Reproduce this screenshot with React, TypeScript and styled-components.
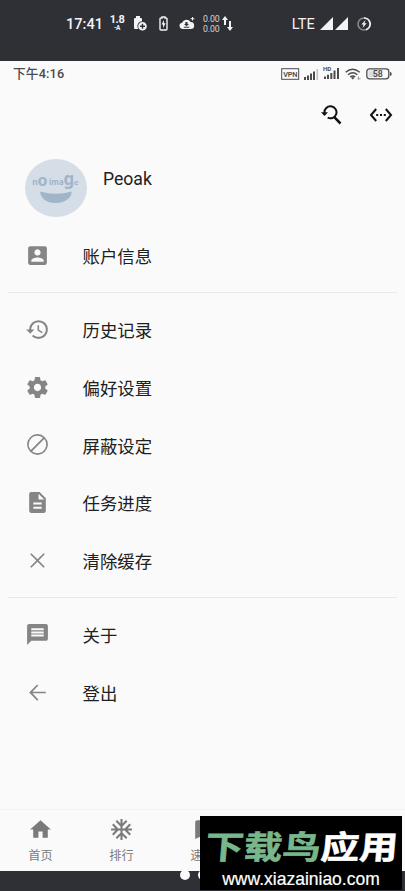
import React from 'react';
import styled, { createGlobalStyle } from 'styled-components';

const Global = createGlobalStyle`
  * { box-sizing: border-box; }
  body { margin: 0; background: #2f3036; font-family: Roboto, "Noto Sans CJK SC", sans-serif; }
`;

const Screen = styled.div`
  position: relative;
  width: 405px;
  height: 891px;
  display: flex;
  flex-direction: column;
  overflow: hidden;
  background: #2f3036;
`;

const SystemBar = styled.header`
  height: 61px;
  flex: none;
  display: flex;
  align-items: center;
  padding: 0 34px 14px 66px;
  color: #f3f3f5;
`;

const Clock = styled.span`
  width: 44px;
  margin-top: 1px;
  font-size: 14.6px;
  font-weight: 500;
  line-height: 18px;
  white-space: nowrap;
`;

const Amps = styled.span`
  width: 14px;
  display: flex;
  flex-direction: column;
  align-items: center;
  font-weight: 700;
  font-size: 11px;
  letter-spacing: -0.4px;
`;

const AmpValue = styled.span`
  line-height: 10px;
`;

const AmpUnit = styled.small`
  font-size: 6.5px;
  line-height: 7px;
`;

const Speed = styled.span`
  width: 18px;
  margin-left: 8px;
  font-size: 8.7px;
  line-height: 10px;
  letter-spacing: -0.1px;
  color: #d4d4d8;
`;

const Glyph = styled.svg<{ $w: number; $h?: number; $ml?: number; $mt?: number }>`
  display: block;
  flex: none;
  width: ${p => p.$w}px;
  height: ${p => p.$h ?? p.$w}px;
  margin-left: ${p => p.$ml ?? 0}px;
  margin-top: ${p => p.$mt ?? 0}px;
  fill: currentColor;
`;

const Spacer = styled.span`
  flex: 1;
`;

const Network = styled.span`
  font-size: 14.6px;
  line-height: 18px;
  letter-spacing: 0.1px;
`;

const Phone = styled.main`
  height: 810px;
  flex: none;
  display: flex;
  flex-direction: column;
  background: #fafafa;
  color: #202020;
`;

const PhoneBar = styled.div`
  height: 26px;
  display: flex;
  align-items: center;
  padding: 0 13px 0 13px;
  color: #4b4b4b;
`;

const PhoneTime = styled.span`
  font-size: 12.7px;
  font-weight: 500;
  line-height: 18px;
  letter-spacing: 0.15px;
`;

const Actions = styled.div`
  height: 56px;
  display: flex;
  justify-content: flex-end;
  align-items: center;
  padding-right: 12.5px;
  color: #111;
`;

const Profile = styled.section`
  height: 84px;
  display: flex;
  padding: 16px 25px 0;
`;

const Name = styled.span`
  margin: 10px 0 0 16px;
  font-size: 17.6px;
  line-height: 20px;
`;

const Group = styled.ul`
  list-style: none;
  margin: 0 8px;
  padding: 8px 0 7.6px;
  border-bottom: 1px solid #e8e8e8;
  &:first-of-type { padding-top: 0; }
  &:last-of-type { border-bottom: 0; }
`;

const Row = styled.li`
  height: 57.7px;
  display: flex;
  align-items: center;
  padding: 2px 0 0 16.5px;
  gap: 33px;
  font-size: 17.4px;
  line-height: 24px;
`;

const RowIcon = styled.svg`
  width: 25px;
  height: 25px;
  flex: none;
  fill: #858585;
  margin-top: -3.5px;
`;

const Nav = styled.nav`
  height: 62px;
  margin-top: auto;
  display: grid;
  grid-template-columns: repeat(5, 81px);
  border-top: 1px solid #f3f3f3;
`;

const Tab = styled.div`
  display: flex;
  flex-direction: column;
  align-items: center;
  padding-top: 7px;
  font-size: 12.2px;
  line-height: 18px;
  gap: 5px;
  color: #7a7a7a;
`;

const Dots = styled.div`
  position: absolute;
  left: 180px;
  top: 870px;
  display: flex;
  gap: 8px;
`;

const Dot = styled.i`
  width: 10px;
  height: 10px;
  border-radius: 50%;
  background: #fafafa;
`;

const Watermark = styled.div`
  position: absolute;
  left: 200px;
  top: 816px;
  width: 202px;
  height: 74px;
  background: #000;
  color: #fff;
  display: flex;
  flex-direction: column;
  align-items: center;
`;

const Brand = styled.div`
  height: 52px;
  margin-left: 3px;
  font: 700 38.5px/60px "Noto Sans CJK SC", sans-serif;
  -webkit-text-stroke: 0.7px currentColor;
  white-space: nowrap;
  transform: translateY(-1px) scaleY(0.84) skewX(-4deg);
`;

const Green = styled.span`
  color: #78b68b;
`;

const Site = styled.div`
  font: 17.5px/22px "Liberation Sans", sans-serif;
  -webkit-text-stroke: 0.2px #fff;
  white-space: nowrap;
`;

const icons = {
  account: 'M3 5v14c0 1.1.89 2 2 2h14c1.1 0 2-.9 2-2V5c0-1.1-.9-2-2-2H5c-1.11 0-2 .9-2 2zm12 4c0 1.66-1.34 3-3 3s-3-1.34-3-3 1.34-3 3-3 3 1.34 3 3zm-9 8c0-2 4-3.1 6-3.1s6 1.1 6 3.1v1H6v-1z',
  history: 'M13 3a9 9 0 0 0-9 9H1l3.89 3.89.07.14L9 12H6c0-3.87 3.13-7 7-7s7 3.13 7 7-3.13 7-7 7c-1.93 0-3.68-.79-4.94-2.06l-1.42 1.42A8.954 8.954 0 0 0 13 21a9 9 0 0 0 0-18zm-1 5v5l4.28 2.54.72-1.21-3.5-2.08V8H12z',
  settings: 'M19.43 12.98c.04-.32.07-.64.07-.98s-.03-.66-.07-.98l2.11-1.65c.19-.15.24-.42.12-.64l-2-3.46c-.12-.22-.39-.3-.61-.22l-2.49 1c-.52-.4-1.08-.73-1.69-.98l-.38-2.65A.488.488 0 0 0 14 2h-4c-.25 0-.46.18-.49.42l-.38 2.65c-.61.25-1.17.59-1.69.98l-2.49-1c-.23-.09-.49 0-.61.22l-2 3.46c-.13.22-.07.49.12.64l2.11 1.65c-.04.32-.07.65-.07.98s.03.66.07.98l-2.11 1.65c-.19.15-.24.42-.12.64l2 3.46c.12.22.39.3.61.22l2.49-1c.52.4 1.08.73 1.69.98l.38 2.65c.03.24.24.42.49.42h4c.25 0 .46-.18.49-.42l.38-2.65c.61-.25 1.17-.59 1.69-.98l2.49 1c.23.09.49 0 .61-.22l2-3.46c.12-.22.07-.49-.12-.64l-2.11-1.65zM12 15.5c-1.93 0-3.5-1.57-3.5-3.5s1.57-3.5 3.5-3.5 3.5 1.57 3.5 3.5-1.57 3.5-3.5 3.5z',
  block: 'M12 2a10 10 0 1 0 0 20 10 10 0 0 0 0-20zm0 1.7a8.3 8.3 0 0 1 5.3 1.9L5.6 17.3A8.3 8.3 0 0 1 12 3.7zm0 16.6a8.3 8.3 0 0 1-5.2-1.8L18.5 6.8A8.3 8.3 0 0 1 12 20.3z',
  file: 'M14 2H6c-1.1 0-1.99.9-1.99 2L4 20c0 1.1.89 2 1.99 2H18c1.1 0 2-.9 2-2V8l-6-6zm2 16H8v-2h8v2zm0-4H8v-2h8v2zm-3-5V3.5L18.5 9H13z',
  close: 'M19 6.1 17.9 5 12 10.9 6.1 5 5 6.1l5.9 5.9L5 17.9 6.1 19l5.9-5.9 5.9 5.9 1.1-1.1-5.9-5.9z',
  message: 'M20 2H4c-1.1 0-1.99.9-1.99 2L2 22l4-4h14c1.1 0 2-.9 2-2V4c0-1.1-.9-2-2-2zm-2 12H6v-2h12v2zm0-3H6V9h12v2zm0-3H6V6h12v2z',
  back: 'M20 11.2H7.1l5.7-5.9L11.7 4.2 4 12l7.7 7.8 1.1-1.1-5.7-5.9H20z',
  home: 'M10 20v-6h4v6h5v-8h3L12 3 2 12h3v8z',
  snow: 'M22 11h-4.17l3.24-3.24-1.41-1.42L15 11h-2V9l4.66-4.66-1.42-1.41L13 6.17V2h-2v4.17L7.76 2.93 6.34 4.34 11 9v2H9L4.34 6.34 2.93 7.76 6.17 11H2v2h4.17l-3.24 3.24 1.41 1.42L9 13h2v2l-4.66 4.66 1.42 1.41L11 17.83V22h2v-4.17l3.24 3.24 1.42-1.41L13 15v-2h2l4.66 4.66 1.41-1.42L17.83 13H22z',
  bookmark: 'M17 3H7c-1.1 0-2 .9-2 2v16l7-3 7 3V5c0-1.1-.9-2-2-2z',
};

type IconName = keyof typeof icons;

const groups: [IconName, string][][] = [
  [['account', '账户信息']],
  [
    ['history', '历史记录'],
    ['settings', '偏好设置'],
    ['block', '屏蔽设定'],
    ['file', '任务进度'],
    ['close', '清除缓存'],
  ],
  [['message', '关于'], ['back', '登出']],
];

const tabs: [IconName, string][] = [['home', '首页'], ['snow', '排行'], ['bookmark', '速览']];

const Avatar = () => (
  <Glyph $w={62} $h={58} viewBox="0 0 62 58">
    <ellipse cx="31" cy="29" rx="31" ry="29" fill="#d5dde7" />
    <g fill="#a0b4ca" fontFamily="Noto Sans" fontWeight="700">
      <text x="7.3" y="25.5" fontSize="8.5">n</text>
      <text x="12.4" y="26.6" fontSize="16">o</text>
      <text x="24" y="25.5" fontSize="8.5" textLength="14.6" lengthAdjust="spacingAndGlyphs">ima</text>
      <text x="38.6" y="26" fontSize="17">g</text>
      <text x="49" y="25.5" fontSize="7.5">e</text>
    </g>
    <path d="M15 32.5Q31 37 46.5 32.5Q47 36 43.5 39.5C37 45.5 24 45.5 18 39.5Q15 36 15 32.5Z" fill="#a0b4ca" />
  </Glyph>
);

export default function App() {
  return (
    <>
      <Global />
      <Screen>
        <SystemBar>
          <Clock>17:41</Clock>
          <Amps><AmpValue>1.8</AmpValue><AmpUnit>-A</AmpUnit></Amps>
          <Glyph $w={14} $h={16} $ml={9} viewBox="0 0 14 16">
            <path d="M1 3Q1 2 2 2h1V0h4v2h1q1 0 1 1v2.2A5 5 0 0 0 5.3 13H2q-1 0-1-1z" />
            <path fillRule="evenodd" d="M9.5 6a4.3 4.3 0 1 1 0 8.6 4.3 4.3 0 0 1 0-8.6zm-.7 1.8v1.8H7V11h1.8v1.8h1.4V11H12V9.6h-1.8V7.8z" />
          </Glyph>
          <Glyph $w={9} $h={15} $ml={12} viewBox="0 0 9 15">
            <path d="M3 1v1H2Q1 2 1 3v10q0 1 1 1h5q1 0 1-1V3q0-1-1-1H6V1z" fill="none" stroke="currentColor" strokeWidth="1.4" />
            <path d="M5 4 2.5 8.5H4V12l2.6-4.7H5z" />
          </Glyph>
          <Glyph $w={16} $h={13} $ml={11} viewBox="0 0 16 13">
            <path fillRule="evenodd" d="M3.3 12A3.2 3.2 0 0 1 3 5.7 4.8 4.8 0 0 1 11.6 5 3.5 3.5 0 0 1 11.7 12zM6.4 5v2H5l2.5 2.3L10 7H8.5V5zM4.8 9.7v1h5.5v-1z" />
            <path d="M13 0h1v1.2h1.4v1H14v1.3h-1V2.2h-1.4v-1H13z" />
          </Glyph>
          <Speed>0.00<br />0.00</Speed>
          <Glyph $w={11} $h={15} $ml={1} viewBox="0 0 11 15">
            <path d="M3 0 6 4H4v5H2V4H0zM8 15l-3-4h2V5h2v6h2z" />
          </Glyph>
          <Spacer />
          <Network>LTE</Network>
          <Glyph $w={13} $ml={5} viewBox="0 0 13 13"><path d="M0 13 13 0v13z" /></Glyph>
          <Glyph $w={13} $ml={2} viewBox="0 0 13 13"><path d="M0 13 13 0v13z" /></Glyph>
          <Glyph $w={14} $ml={9} viewBox="0 0 14 14">
            <circle cx="7" cy="7" r="6" fill="none" stroke="#88898d" strokeWidth="1.6" />
            <path d="M7 1a6 6 0 0 1 2 11.7" fill="none" stroke="currentColor" strokeWidth="1.7" />
            <path d="M8.5 3 4.3 7.5h2.2L5.5 11l4.2-4.7H7.5z" />
          </Glyph>
        </SystemBar>
        <Phone>
          <PhoneBar>
            <PhoneTime>下午4:16</PhoneTime>
            <Spacer />
            <Glyph $w={19} $h={12} viewBox="0 0 19 12">
              <rect x=".7" y=".7" width="17" height="10.6" fill="none" stroke="currentColor" />
              <text x="2.3" y="8.6" fontSize="7.3" fontWeight="600" textLength="14">VPN</text>
            </Glyph>
            <Glyph $w={15} $h={11} $ml={4} viewBox="0 0 15 11">
              <path d="M0 8h2v3H0zM3 6.5h2V11H3zM6 4.5h2V11H6zM9 2.5h2V11H9z" />
              <path d="M12.5 0h1.6v11h-1.6z" fill="#c4c4c4" />
            </Glyph>
            <Glyph $w={17} $h={14} $ml={4} $mt={-2} viewBox="0 0 17 14">
              <text x="0" y="4.8" fontSize="6.2" fontWeight="700">HD</text>
              <path d="M1 10.5h2V13H1zM4 8.7h2V13H4zM7.3 7h2v6h-2zM10.5 4.5h2V13h-2zM14 2h2v11h-2z" />
            </Glyph>
            <Glyph $w={16} $h={12} $ml={5} viewBox="0 0 16 12">
              <path d="M.7 4.2Q7.5-1.7 14.7 4.2M3 6.7Q7.7 2.9 12.4 6.7M5.2 9q2.5-1.9 5 0" fill="none" stroke="currentColor" strokeWidth="1.4" />
              <path d="M6 9.7q1.7-1.3 3.4 0L7.7 11.6z" />
              <path d="M13.5 8.5v3M12.5 10.8h3" stroke="#999" />
            </Glyph>
            <Glyph $w={26} $h={12} $ml={5} viewBox="0 0 26 12">
              <rect x=".8" y=".8" width="22" height="10" rx="2.7" fill="none" stroke="currentColor" strokeWidth="1.3" />
              <path d="M2.5 2.5h11v6.7h-11z" fill="#ddd" />
              <path d="M24 4q1.7 0 1.7 2T24 8z" />
              <text x="6.8" y="9" fontSize="8.8" fontWeight="600">58</text>
            </Glyph>
          </PhoneBar>
          <Actions>
            <Glyph $w={21} $h={20} $mt={-1} viewBox="0 0 21 20">
              <g fill="none" stroke="currentColor" strokeWidth="2">
                <path d="M3.5 7.8A6 6 0 1 1 6.7 12.6" />
                <path d="m13.3 12.2 6.2 6.3" strokeWidth="2.5" />
              </g>
              <path d="M0 7.2h7L3.5 11z" />
            </Glyph>
            <Glyph $w={24} $h={16} $ml={27} $mt={-1} viewBox="0 0 24 16">
              <path d="M7.2 2 2 8l5.2 6M16.8 2 22 8l-5.2 6" fill="none" stroke="currentColor" strokeWidth="2" />
              <path d="M7.2 7h2v2h-2zM11 7h2v2h-2zM14.8 7h2v2h-2z" />
            </Glyph>
          </Actions>
          <Profile>
            <Avatar />
            <Name>Peoak</Name>
          </Profile>
          {groups.map((rows, i) => (
            <Group key={i}>
              {rows.map(([icon, label]) => (
                <Row key={label}>
                  <RowIcon viewBox="0 0 24 24"><path d={icons[icon]} /></RowIcon>
                  {label}
                </Row>
              ))}
            </Group>
          ))}
          <Nav>
            {tabs.map(([icon, label]) => (
              <Tab key={label}>
                <Glyph $w={25} viewBox="0 0 24 24"><path d={icons[icon]} /></Glyph>
                {label}
              </Tab>
            ))}
          </Nav>
        </Phone>
        <Dots><Dot /><Dot /></Dots>
        <Watermark>
          <Brand><Green>下载鸟</Green>应用</Brand>
          <Site>www.xiazainiao.com</Site>
        </Watermark>
      </Screen>
    </>
  );
}
